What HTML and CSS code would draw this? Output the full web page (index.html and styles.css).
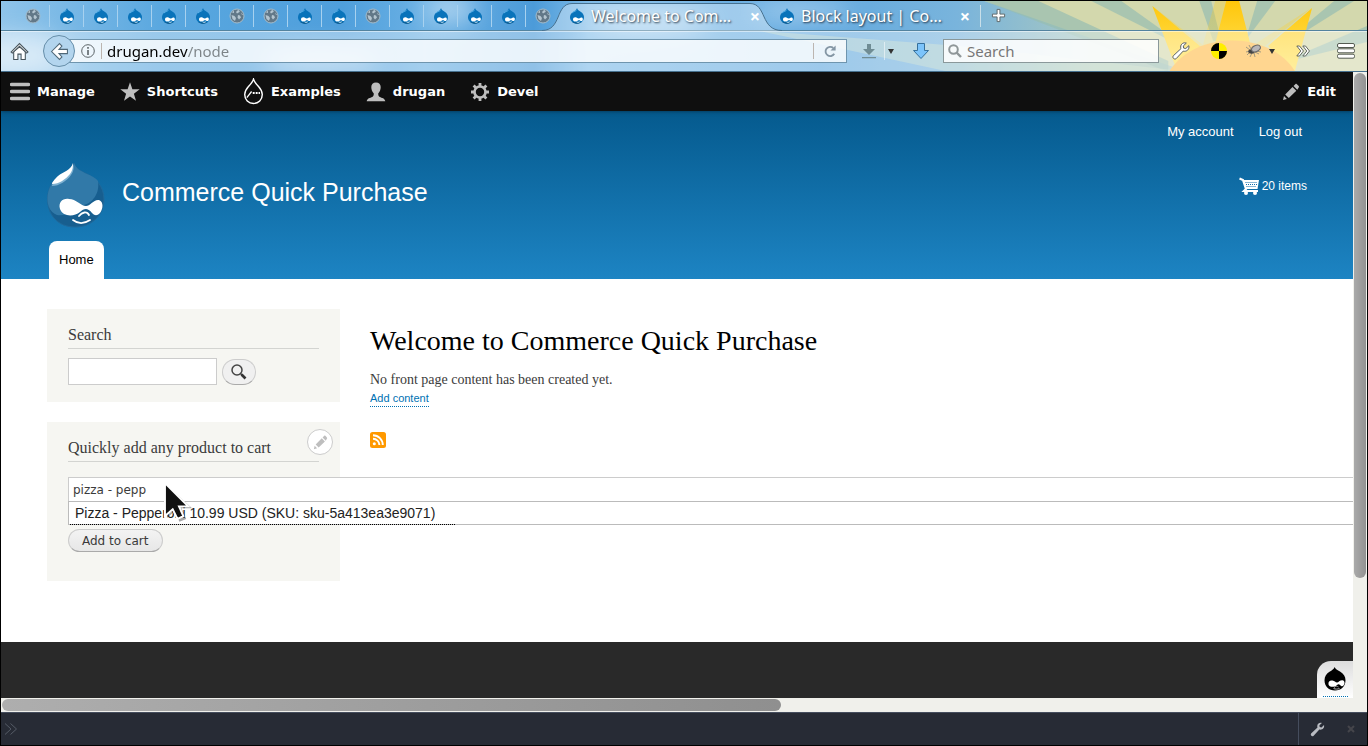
FILE: index.html
```html
<!DOCTYPE html>
<html lang="en">
<head>
<meta charset="utf-8">
<title>Welcome to Commerce Quick Purchase</title>
<link rel="stylesheet" href="styles.css">
</head>
<body>
<svg class="defs" aria-hidden="true">
  <symbol id="drop" viewBox="0 0 16 16">
    <path d="M8 0C8.4 2 10 2.600 12 4c2 1.400 3 3.200 3 5.300C15 13 12 15.600 8 15.600S1 13 1 9.300C1 7 2.200 5.200 4 4 6 2.800 7.600 2 8 0z" fill="#0973ba"/>
    <path d="M3 14c3 2.300 7 2.300 10 0-2 .6-7 .8-10 0z" fill="#06507f"/>
    <path d="M3 5c1.500-1.400 3-1.800 4.400-2.500" stroke="#5db2e8" fill="none"/>
    <path d="M4 11.500c0-1.600 1.200-2.400 2.600-2.200 1.400.2 2 1.200 3 1.200 1.100 0 1.700-1.300 3-1.100 1.200.2 1.500 1.400 1.100 2.500-.5 1.400-1.900 1.500-2.700.6-.8-.8-1.200-.8-2 0-1.600 1.600-5 1.500-5-1z" fill="#fff"/>
    <path d="M7.500 13.800c1 .7 2.200.7 3.200 0" stroke="#d6ecf9" fill="none"/>
  </symbol>
  <symbol id="globe" viewBox="0 0 16 16">
    <circle cx="8" cy="8" r="7" fill="#627888" stroke="#a3bccc"/>
    <path d="M9 2c1.500.3 2 1 1.500 2L8 5.500 7 4zM2.500 7l3 1 1.500 2-1 3-2.500-2zM9 7l2 .5 1 2-2 2-1.500-2zM12 4.500l2 2-1 .5zM5 2.500L3 4.500l2 .5z" fill="#b4c5d0"/>
  </symbol>
  <symbol id="pencil" viewBox="0 0 18 18">
    <path d="M1 17l1-4 2.900 3zM3.200 11.400l7.300-7.500 3.800 3.800-7.500 7.400zM11.500 2.900L13.800.7c.6-.5 3.700 2.600 3.200 3.300l-1.700 2.800z"/>
  </symbol>
  <symbol id="wrench" viewBox="0 0 18 18">
    <path d="M16.800 3.700l-3 2.800-2.200-.4-.3-2.200 3-2.800c-2.800-1-5.800.9-5.600 4 0 .9.100 1.200.3 1.500L1.300 13.800c-1.300 1.900 1 4.100 2.800 2.900l7.100-7.600c3.300.9 6.600-1.700 5.600-5.400z"/>
  </symbol>
</svg>

<header class="chrome">
  <svg class="scene" viewBox="0 0 1368 71" preserveAspectRatio="xMaxYMin slice" aria-hidden="true">
    <defs>
      <linearGradient id="sky" x1="0" x2="1">
        <stop offset="0" stop-color="#8fc4ea"/><stop offset=".12" stop-color="#59a7df"/><stop offset=".25" stop-color="#4f9fdc"/><stop offset=".31" stop-color="#6bb1e4"/><stop offset=".39" stop-color="#4c9bd9"/><stop offset=".43" stop-color="#7dbbe8"/><stop offset=".6" stop-color="#62a9df"/><stop offset=".7" stop-color="#79b4dc"/><stop offset=".8" stop-color="#a9c8c0"/><stop offset="1" stop-color="#c0ceaa"/>
      </linearGradient>
      <linearGradient id="ray" x1="0" x2="0" y1="0" y2="1"><stop offset="0" stop-color="#ffc60a"/><stop offset="1" stop-color="#ffe664"/></linearGradient>
      <filter id="soft" x="-50%" y="-50%" width="200%" height="200%"><feGaussianBlur stdDeviation="12"/></filter>
    </defs>
    <rect width="1368" height="71" fill="url(#sky)"/>
    <g fill="#fff" opacity=".5" filter="url(#soft)"><ellipse cx="20" cy="55" rx="50" ry="20"/><ellipse cx="320" cy="60" rx="60" ry="12"/><ellipse cx="450" cy="8" rx="26" ry="14"/><ellipse cx="650" cy="22" rx="60" ry="12"/><ellipse cx="800" cy="10" rx="50" ry="8"/></g>
    <path d="M985 0h383v71h-180z" fill="#d3d8ad"/>
    <path d="M985 0h54l130 60v11zM1092 0h30l70 50zM1200 0h12l10 40-8 0zM1258 0h18l-30 40zM1335 0h20l-80 50zM1368 25v16l-90 22z" fill="#97bdb0" opacity=".7"/>
    <path d="M760 30l190 41H1190L960 45z" fill="#cfe0c0" opacity=".4"/>
    <path d="M1153 5l52 40-28 26h116l-27-26 46-38-70 45-14-52h-12l-14 50z" fill="url(#ray)" opacity=".3"/>
    <path d="M1153 5l50 42-24 26zM1227 0h13l13 50h-39zM1313 7l-18 66-26-28z" fill="url(#ray)"/>
    <path d="M1168 74c24-46 106-46 130 0z" fill="#ffbd4d"/>
  </svg>

  <nav class="tabs" aria-label="Tabs">
    <a class="pin" href="#"><svg><use href="#globe"/></svg></a>
    <a class="pin" href="#"><svg><use href="#drop"/></svg></a>
    <a class="pin" href="#"><svg><use href="#drop"/></svg></a>
    <a class="pin" href="#"><svg><use href="#drop"/></svg></a>
    <a class="pin" href="#"><svg><use href="#drop"/></svg></a>
    <a class="pin" href="#"><svg><use href="#drop"/></svg></a>
    <a class="pin" href="#"><svg><use href="#globe"/></svg></a>
    <a class="pin" href="#"><svg><use href="#globe"/></svg></a>
    <a class="pin" href="#"><svg><use href="#drop"/></svg></a>
    <a class="pin" href="#"><svg><use href="#drop"/></svg></a>
    <a class="pin" href="#"><svg><use href="#globe"/></svg></a>
    <a class="pin" href="#"><svg><use href="#drop"/></svg></a>
    <a class="pin" href="#"><svg><use href="#drop"/></svg></a>
    <a class="pin" href="#"><svg><use href="#drop"/></svg></a>
    <a class="pin" href="#"><svg><use href="#drop"/></svg></a>
    <a class="pin last" href="#"><svg><use href="#globe"/></svg></a>
    <div class="tab active">
      <svg class="shape" viewBox="0 0 240 30" preserveAspectRatio="none" aria-hidden="true"><path d="M0 29.500C20 29.500 13 2.500 30 2.500H208C225 2.500 218 29.500 240 29.500V31H0z" fill="#fff" fill-opacity=".35"/><path d="M0 29.500C20 29.500 13 2.500 30 2.500H208C225 2.500 218 29.500 240 29.500" fill="none" stroke="#47718f"/></svg>
      <svg class="fav"><use href="#drop"/></svg><a href="#">Welcome to Com…</a><button class="close" aria-label="Close tab">×</button>
    </div>
    <div class="tab">
      <svg class="fav"><use href="#drop"/></svg><a href="#">Block layout | Co…</a><button class="close" aria-label="Close tab">×</button>
    </div>
    <button class="newtab" aria-label="New tab"><svg viewBox="0 0 16 16"><path d="M6.500 1.500h3v5h5v3h-5v5h-3v-5h-5v-3h5z" fill="#fff" stroke="#5b6468"/></svg></button>
  </nav>

  <div class="navbar">
    <button class="home" aria-label="Home"><svg viewBox="0 0 18 18"><path d="M3.500 9v7.500h4v-5h3v5h4V9L9 4.500z" fill="#fff" stroke="#47545c"/><path d="M1 9.500l8-8 8 8-1.200 1L9 4l-6.800 6.500z" fill="#fff" stroke="#47545c"/></svg></button>
    <button class="back" aria-label="Back"><svg viewBox="0 0 18 18"><path d="M1.500 9L9 1.500l2.300 2.300L8.500 7H16.500v4H8.500l2.800 3.200L9 16.500z" fill="#fff" stroke="#4f6878"/></svg></button>
    <div class="url">
      <svg class="info" viewBox="0 0 14 14"><circle cx="7" cy="7" r="6.300" fill="none" stroke="#5c6468"/><path d="M7 3v1.700M7 6v5" stroke="#5c6468" stroke-width="1.600"/></svg>
      <span class="rule"></span>
      <input class="address" type="text" aria-label="Address" value="drugan.dev/node">
      <button class="reload" aria-label="Reload"><svg viewBox="0 0 14 14"><path d="M11 9.500A5 5 0 1 1 10 3.200" fill="none" stroke="#8496a4" stroke-width="2"/><path d="M12.500.500V6H7z" fill="#8496a4"/></svg></button>
    </div>
    <button class="dl" aria-label="Downloads"><svg viewBox="0 0 14 16"><path d="M5 1h4v5h4l-6 6-6-6h4zM0 14h14v1.200H0z" fill="#6f8c94"/></svg></button>
    <button class="caret c1" aria-label="More downloads"></button>
    <button class="arrow" aria-label="Save"><svg viewBox="0 0 18 18"><path d="M5.500 1.500h7v7h4L9 16.500 1.500 8.500h4z" fill="#7cc4fb" stroke="#36709c"/></svg></button>
    <label class="find"><svg viewBox="0 0 14 14"><circle cx="5.500" cy="5.500" r="4.300" fill="none" stroke="#8f9799" stroke-width="2"/><path d="M8.500 8.500l4.500 4.500" stroke="#8f9799" stroke-width="2.400"/></svg><input type="text" aria-label="Search the web" placeholder="Search"></label>
    <button class="tool" aria-label="Tools"><svg viewBox="0 0 18 18" fill="#fff" stroke="#596064"><use href="#wrench"/></svg></button>
    <button class="tool nuke" aria-label="Checker"><svg viewBox="0 0 16 16"><circle cx="8" cy="8" r="8" fill="#ffee00"/><path d="M8 8V0a8 8 0 0 0-8 8zM8 8v8a8 8 0 0 0 8-8z" fill="#000"/></svg></button>
    <button class="tool fly" aria-label="Debugger"><svg viewBox="0 0 16 14"><path d="M0 3l4 3M0 8l4-1M4 13l2-4M9 13l-1-4M1 11l3-3M13 10l-4-2M3 1l2 4M15 8l-5-1" stroke="#8a8a7c" stroke-width=".8"/><ellipse cx="5.500" cy="7.500" rx="3.200" ry="2.200" fill="#444"/><ellipse cx="10" cy="4.500" rx="4.600" ry="3" transform="rotate(-25 10 4.500)" fill="#b8b6b8" stroke="#6b6b6b"/></svg></button>
    <button class="caret c2" aria-label="Debugger options"></button>
    <button class="tool more" aria-label="More tools"><svg viewBox="0 0 14 12"><path d="M.8 1h2.700l4 5-4 5H.8l4-5zM6.800 1h2.700l4 5-4 5H6.800l4-5z" fill="#fff" stroke="#555b52" stroke-width=".9"/></svg></button>
    <button class="tool menu" aria-label="Menu"><svg viewBox="0 0 18 16"><g fill="#fff" stroke="#555b52"><rect x=".5" y=".5" width="17" height="4" rx="1.500"/><rect x=".5" y="5.800" width="17" height="4" rx="1.500"/><rect x=".5" y="11.200" width="17" height="4" rx="1.500"/></g></svg></button>
  </div>
</header>

<div class="frame">
  <div class="page">
    <nav class="admin" aria-label="Administration">
      <a href="#"><svg viewBox="0 0 20 20"><path d="M1.500 2.500h17M1.500 9.500h17M1.500 16.500h17" stroke="#bebebe" stroke-width="3.400" stroke-linecap="round"/></svg>Manage</a>
      <a href="#"><svg viewBox="0 0 20 20"><path d="M10 .3l2.400 6.900 7.300.1-5.800 4.400 2.100 7-6-4.200-6 4.200 2.100-7L.3 7.300l7.300-.1z" fill="#bebebe"/></svg>Shortcuts</a>
      <a class="examples" href="#"><svg viewBox="0 0 22 28"><path d="M11 1c.8 3 3 5.300 5.500 8 2.200 2.500 3.700 5 3.700 8.200 0 5.600-4 9.300-9.200 9.300s-9.200-3.700-9.200-9.300c0-3.200 1.500-5.700 3.700-8.200C8 6.300 10.200 4 11 1z" fill="none" stroke="#fff" stroke-width="1.500"/><path d="M4 20.500l5-6.500" stroke="#fff" stroke-width="1.300"/><path d="M10.200 15.500h2M13.300 15.500h2M16.300 15.500h1.500" stroke="#fff" stroke-width="2"/></svg>Examples</a>
      <a href="#"><svg viewBox="0 0 20 20"><path d="M10 .5c3 0 4.700 1.800 4.700 4.500 0 2.400-.8 4.500-2.500 6.500 0 1.600.2 2.600 1.500 3.400 2.200 1 5 1 5.600 4.300H.700c.6-3.300 3.400-3.300 5.600-4.300 1.300-.8 1.500-1.800 1.500-3.400C6.100 9.500 5.300 7.400 5.300 5 5.300 2.300 7 .5 10 .5z" fill="#bebebe"/></svg>drugan</a>
      <a href="#"><svg viewBox="0 0 20 20"><circle cx="10" cy="10" r="5.500" fill="none" stroke="#bebebe" stroke-width="2.600"/><path d="M10 1v3.500M10 15.500V19M1 10h3.500M15.500 10H19M3.600 3.600l2.500 2.500M13.900 13.900l2.500 2.500M3.600 16.400l2.500-2.500M13.900 6.100l2.500-2.500" stroke="#bebebe" stroke-width="2.800"/></svg>Devel</a>
      <a class="edit" href="#"><svg fill="#bebebe"><use href="#pencil"/></svg>Edit</a>
    </nav>

    <header class="site">
      <nav class="account"><a href="#">My account</a><a href="#">Log out</a></nav>
      <div class="brand">
        <svg class="logo" viewBox="0 0 58 66" aria-hidden="true">
          <path d="M27 1c2 6 7 8 13 11 9 4 17 13 17 25 0 16-12 28-29 28S.5 53 .5 37c0-8 3-15 8-20C15 10 25 9 27 1z" fill="#175e8f" stroke="#20699b"/>
          <path d="M27 1c2 6 7 8 13 11 5 2 9 4 11 7 2 13-6 22-14 24-11 2-16 12-27 10C3 50 .5 44 .5 37c0-8 3-15 8-20C15 10 25 9 27 1z" fill="#3179a8"/>
          <path d="M26 2c-2 7-10 9-15 13-3 3-6 7-6 9 7 0 15-5 19-11 3-4 3-8 2-11z" fill="#7eb1d1"/>
          <path d="M26 1c-2 7-10 9-15 13-3 3-6 6-6 8 7 0 14-5 18-10 3-4 3-8 3-11z" fill="#fff"/>
          <path d="M13 47c-2-7 3-11 9-10 7 0 12 7 17 7 4 0 8-7 13-6 5 2 4 9 1 13-3 3-5 3-8 0-5-6-8-4-12-1-6 5-17 5-20-3z" fill="#fff"/>
          <path d="M32 54c3-4 8-5 10-1M26 58c5 4 11 4 17 0" fill="none" stroke="#fff" stroke-width="1.800" stroke-linecap="round"/>
        </svg>
        <a class="name" href="#">Commerce Quick Purchase</a>
        <a class="cart" href="#"><svg viewBox="0 0 20 18" aria-hidden="true"><path d="M.5 1.500L4 3l3 9-2 2h14" fill="none" stroke="#fff" stroke-width="2.200"/><path d="M4 3h16l-1.500 9H6.500z" fill="#fff"/><path d="M6.500 5.500h11.500M7 7.500h11M7.500 9.500h10" stroke="#126daa" stroke-dasharray="1 1"/><circle cx="7" cy="16" r="2" fill="#fff"/><circle cx="16" cy="16" r="2" fill="#fff"/></svg>20 items</a>
      </div>
      <nav class="main-menu"><a href="#">Home</a></nav>
    </header>

    <div class="columns">
      <aside class="side">
        <section class="block">
          <h2>Search</h2>
          <form class="search"><input type="text" aria-label="Search"><button type="button" aria-label="Search this site"><svg viewBox="0 0 16 16"><circle cx="6" cy="6" r="5" fill="none" stroke="#444" stroke-width="1.500"/><path d="M9.500 9.500l2 2" stroke="#444" stroke-width="1.600"/><path d="M10.500 10.500l4 4" stroke="#333" stroke-width="2.600"/></svg></button></form>
        </section>
        <section class="block buy">
          <button class="ctx" aria-label="Configure block"><svg fill="#bebebe"><use href="#pencil"/></svg></button>
          <h2>Quickly add any product to cart</h2>
          <form>
            <div class="auto">
              <input type="text" aria-label="Product" value="pizza - pepp">
              <div class="options"><a href="#">Pizza - Pepperoni 10.99 USD (SKU: sku-5a413ea3e9071)</a></div>
              <svg class="cursor" viewBox="0 0 30 42" aria-hidden="true"><path d="M3 3v34l8-7 5 11 7-3-5-11h11z" fill="#000" opacity=".35"/><path d="M1 1v34l8-7 5 10 6-3-4.500-10H25z" fill="#111" stroke="#fff" stroke-width="2"/></svg>
            </div>
            <button class="add" type="button">Add to cart</button>
          </form>
        </section>
      </aside>
      <main class="content">
        <h1>Welcome to Commerce Quick Purchase</h1>
        <p>No front page content has been created yet.</p>
        <a class="addlink" href="#">Add content</a>
        <a class="feed" href="#" aria-label="Subscribe"><svg viewBox="0 0 16 16"><rect width="16" height="16" rx="2.500" fill="#ff9900"/><circle cx="4.300" cy="11.800" r="1.500" fill="#fff"/><path d="M3 6.700a6.400 6.400 0 0 1 6.400 6.400M3 3.300a9.800 9.800 0 0 1 9.800 9.800" fill="none" stroke="#fff" stroke-width="1.900"/></svg></a>
      </main>
    </div>

    <footer class="foot"><a class="debug" href="#" aria-label="Open debug bar"><svg viewBox="0 0 22 24"><path d="M10.500 0c.7 2 3 3 5.500 4.500 3.500 2 5.500 5 5.500 8.700C21.500 19.500 17 23.500 11 23.500S.5 19.500.5 13.200C.5 9.500 2.500 6.500 5.500 4.700 8 3.200 10 2.200 10.500 0z" fill="#000"/><path d="M4.500 17.500c-.5-3 1.500-4.500 4-4 2 .3 3 2 4.500 2s3-2.500 5.500-2.200c2.500.4 2.500 3.700 1 5.200s-2.500.5-3.500-.5-2-.8-3.200.3c-2.500 2.200-7.600 2.200-8.300-.8z" fill="#fff"/><path d="M10 20.500c2-1.700 3-1.500 4.500-.5M9.500 21.500c2 .8 4 .8 6 0" stroke="#aaa" fill="none"/></svg></a></footer>
  </div>
  <div class="vbar"><span></span></div>
  <div class="hbar"><span></span></div>
</div>

<div class="console">
  <svg class="prompt" viewBox="0 0 14 12"><path d="M1 .5L7 6l-6 5.500M6.500.5L12.500 6l-6 5.500" fill="none" stroke="#555b66"/></svg>
  <div class="actions">
    <button aria-label="Settings"><svg class="spanner" viewBox="0 0 18 18" fill="#b9bcc2"><use href="#wrench"/></svg></button>
    <button aria-label="Close"><svg class="x" viewBox="0 0 8 8"><path d="M1 1l6 6M7 1L1 7" stroke="#45454b" stroke-width="2"/></svg></button>
  </div>
</div>
</body>
</html>
```

FILE: styles.css
```css
* { box-sizing: border-box; }
body {
  margin: 0;
  min-height: 100vh;
  display: flex;
  flex-direction: column;
  border: 1px solid #000;
  background: #fff;
  font-family: "Liberation Serif", serif;
  color: #3b3b3b;
}
a { color: inherit; text-decoration: none; }
button { border: 0; padding: 0; background: none; font: inherit; color: inherit; }
svg { display: block; flex: none; }
h1, h2, p { margin: 0; font-weight: normal; }
.defs { position: absolute; width: 0; height: 0; }

/* Browser chrome */
.chrome { position: relative; overflow: hidden; border-bottom: 1px solid #47718f; font-family: "Noto Sans", sans-serif; font-size: 15px; }
.scene { position: absolute; inset: 0; width: 100%; height: 100%; }
.tabs { position: relative; display: flex; height: 30px; align-items: center; padding-left: 15px; border-bottom: 1px solid #53839f; }
.pin { width: 34px; height: 22px; display: grid; place-items: center; border-right: 1px solid #a7d1ef; }
.pin.last { border-right: 0; }
.pin svg, .fav { width: 16px; height: 16px; }
.tab { position: relative; display: flex; align-items: center; width: 210px; height: 30px; padding: 0 9px; gap: 6px; color: #fff; text-shadow: 1px 1px 2px #234; }
.tab.active { z-index: 1; }
.shape { position: absolute; left: -18px; top: 0; width: 240px; height: 30px; }
.fav, .tab a { position: relative; }
.tab a { flex: 1; white-space: nowrap; font-size: 16px; }
.close { position: relative; width: 12px; font-size: 18px; font-weight: bold; text-shadow: none; }
.newtab { height: 22px; padding: 0 10px; border-left: 1px solid #c9dfe9; }
.newtab svg { width: 15px; height: 15px; }

.navbar { position: relative; display: flex; align-items: center; height: 40px; padding: 0 12px 0 9px; background: rgba(255,255,255,.38); box-shadow: inset 0 1px rgba(255,255,255,.5); }
.home svg { width: 19px; height: 19px; }
.back { position: relative; z-index: 1; width: 32px; height: 32px; margin-left: 14px; border: 1px solid #668ea9; border-radius: 50%; background: #b3d5ee; display: grid; place-items: center; }
.back svg { width: 19px; height: 19px; }
.url { flex: 1; min-width: 200px; display: flex; align-items: center; height: 24px; margin-left: -10px; padding-left: 15px; background: rgba(255,255,255,.8); border: 1px solid #6f95ae; }
.info { width: 14px; height: 14px; margin-right: 6px; }
.rule { width: 1px; height: 16px; background: #bcb5b0; }
.address { flex: 1; min-width: 0; height: 22px; padding: 0 0 0 5px; border: 0; font: inherit; outline: 0; -webkit-text-fill-color: transparent; background: linear-gradient(90deg, #000 86px, #7d8488 86px); -webkit-background-clip: text; background-clip: text; }
.reload { width: 33px; height: 16px; border-left: 1px solid #bcb5b0; display: grid; place-items: center; }
.reload svg { width: 13px; height: 13px; }
.dl { margin-left: 15px; padding-right: 8px; border-right: 1px solid rgba(255,255,255,.5); }
.dl svg { width: 14px; height: 18px; }
.caret { width: 0; height: 0; border: 3px solid transparent; border-top: 5px solid #333; border-bottom: 0; }
.c1 { margin-left: 3px; }
.arrow { margin: 0 13px 0 18px; }
.arrow svg { width: 18px; height: 18px; }
.find { display: flex; align-items: center; gap: 5px; width: 216px; height: 24px; padding-left: 4px; background: rgba(255,255,255,.85); border: 1px solid #8a989a; }
.find svg { width: 14px; height: 14px; }
.find input { flex: 1; min-width: 0; border: 0; padding: 0; background: none; font: inherit; outline: 0; }
.find input::placeholder { color: #777; opacity: 1; }
.tool { margin-left: 13px; }
.tool svg { width: 18px; height: 18px; }
.tool.nuke { margin-left: 21px; }
.nuke svg { width: 16px; height: 16px; }
.tool.fly { margin-left: 19px; }
.fly svg { width: 16px; height: 14px; }
.c2 { margin-left: 7px; }
.tool.more { margin-left: 21px; }
.more svg { width: 14px; height: 12px; }
.tool.menu { margin-left: 27px; }
.menu svg { height: 16px; }

/* Viewport with scroll bars */
.frame { flex: 1; display: grid; grid-template-columns: minmax(0, 1fr) 14px; grid-template-rows: 1fr 14px; background: #f0f0eb; }
.page { overflow: hidden; display: flex; flex-direction: column; background: #fff; }
.vbar { padding: 1px; }
.vbar span { display: block; height: 81%; border-radius: 6px; background: linear-gradient(90deg, #aaa, #929292); }
.hbar { padding: 1px; }
.hbar span { display: block; width: 57.7%; height: 12px; border-radius: 6px; background: linear-gradient(90deg, #aeaeae, #8f8f8f); }

/* Admin toolbar */
.admin { position: relative; display: flex; align-items: center; gap: 25px; height: 39px; padding: 0 17px 0 9px; background: #0f0f0f; color: #fff; font: bold 13px "DejaVu Sans", sans-serif; box-shadow: 0 0 4px rgba(0,0,0,.5); }
.admin a { display: flex; align-items: center; gap: 7px; }
.admin svg { width: 20px; height: 20px; }
.admin .examples svg { width: 21px; height: 27px; }
.admin .edit { margin-left: auto; }
.admin .edit svg { width: 18px; height: 18px; }

/* Site header */
.site { display: flex; flex-direction: column; padding: 0 46px; background: linear-gradient(#055a8e, #1d84c3); color: #fff; font-family: "Liberation Sans", sans-serif; font-size: 13px; }
.account { display: flex; justify-content: flex-end; gap: 25px; height: 51px; padding: 13px 5px 0 0; line-height: 16px; }
.brand { display: flex; height: 66px; }
.logo { width: 58px; height: 66px; }
.name { margin-left: 17px; font-size: 25px; line-height: 60px; }
.cart { margin-left: auto; display: flex; align-items: center; gap: 3px; height: 48px; font-size: 12px; }
.cart svg { width: 20px; height: 18px; }
.main-menu { display: flex; margin-top: 13px; padding-left: 2px; }
.main-menu a { height: 38px; padding: 0 10px; border-radius: 8px 8px 0 0; background: #fff; color: #000; line-height: 38px; }

/* Body columns */
.columns { flex: 1; display: flex; gap: 30px; padding: 30px 46px 60px; }
.side { width: 293px; flex: none; display: flex; flex-direction: column; gap: 20px; }
.block { position: relative; padding: 16px 21px 17px; background: #f6f6f2; }
.block h2 { padding-bottom: 4px; border-bottom: 1px solid #d3d4d1; font-size: 16px; line-height: 19px; }
.search { display: flex; align-items: center; gap: 5px; margin-top: 9px; }
.search input { width: 149px; height: 27px; border: 1px solid #ccc; background: #fff; }
.search button { width: 34px; height: 26px; display: grid; place-items: center; border: 1px solid #ccc; border-bottom-color: #aaa; border-radius: 13px; background: #f0f0f0; }
.search button svg { width: 16px; height: 16px; }
.block.buy { padding-bottom: 29px; }
.ctx { position: absolute; top: 7px; right: 7px; width: 26px; height: 26px; border: 1px solid #ccc; border-radius: 50%; background: #fff; display: grid; place-items: center; }
.ctx svg { width: 15px; height: 15px; }
.auto { position: relative; width: 1650px; margin-top: 15px; }
.auto input { display: block; width: 100%; height: 26px; padding: 0 4px; border: 1px solid #ccc; background: #fff; color: #3b3b3b; font: 12px "DejaVu Sans", sans-serif; }
.options { position: absolute; top: 24px; left: 0; right: 0; height: 24px; border: 1px solid #bbb; background: #fff; }
.options a { display: inline-block; height: 23px; padding: 0 20px 0 5px; margin-left: 1px; border-bottom: 1px dotted #000; color: #222; font: 14px/22px "Liberation Sans", sans-serif; }
.cursor { position: absolute; left: 96px; top: 5px; width: 29px; height: 41px; }
.add { margin-top: 26px; height: 23px; padding: 0 13px; border: 1px solid #ccc; border-bottom-color: #aaa; border-radius: 12px; background: linear-gradient(#f3f3f3, #e7e7e7); color: #3a3a3a; font: 12px "DejaVu Sans", sans-serif; }

.content { flex: 1; display: flex; flex-direction: column; align-items: flex-start; padding-top: 15px; }
.content h1 { color: #000; font-size: 28px; line-height: 34px; }
.content p { margin-top: 13px; font-size: 14px; line-height: 18px; }
.addlink { margin-top: 1px; border-bottom: 1px dotted #0071b3; color: #0071b3; font: 11px/16px "Liberation Sans", sans-serif; }
.feed { margin-top: 25px; }
.feed svg { width: 16px; height: 16px; }

.foot { display: flex; justify-content: flex-end; align-items: flex-end; height: 56px; background: #292929; }
.debug { width: 36px; height: 37px; padding: 6px 5px 0 6px; border-radius: 14px 0 0 0; background: linear-gradient(#ddd, #fff); }
.debug svg { width: 25px; height: 30px; padding: 0 2px 5px 1px; border-bottom: 1px dotted #0071b3; }

/* Developer console bar */
.console { display: flex; justify-content: space-between; align-items: center; height: 33px; padding-left: 3px; background: #272b35; border-top: 1px solid #454d5d; }
.prompt { width: 14px; height: 12px; }
.actions { display: flex; align-items: center; gap: 22px; height: 32px; padding: 0 12px 0 11px; border-left: 1px solid #454d5d; }
.spanner { width: 15px; height: 15px; }
.x { width: 8px; height: 8px; }
```
